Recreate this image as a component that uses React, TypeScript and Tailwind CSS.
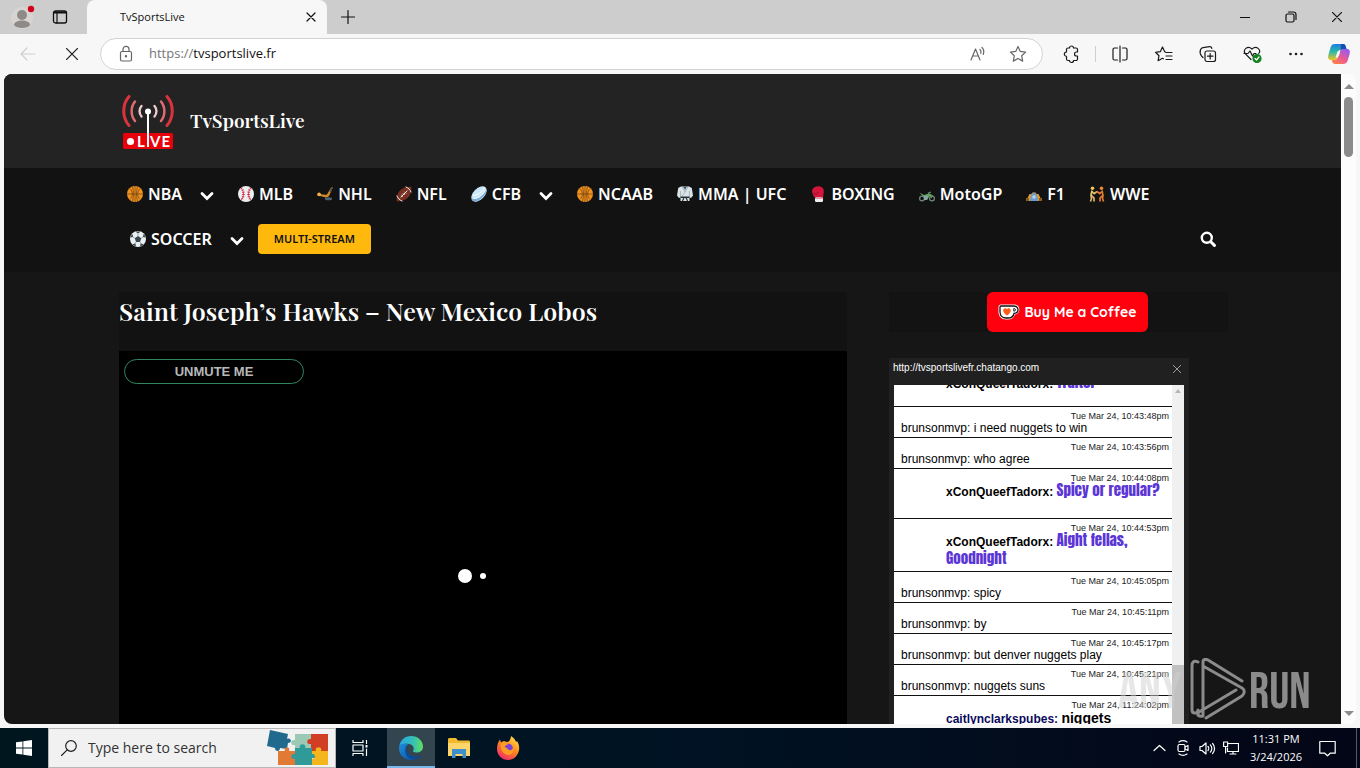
import type { ReactNode } from "react";

const nav = [
  { label: "NBA", icon: <Basketball />, menu: true },
  { label: "MLB", icon: <Baseball /> },
  { label: "NHL", icon: <FieldHockey /> },
  { label: "NFL", icon: <Football /> },
  { label: "CFB", icon: <Rugby />, menu: true },
  { label: "NCAAB", icon: <Basketball /> },
  { label: "MMA | UFC", icon: <Gi /> },
  { label: "BOXING", icon: <Glove /> },
  { label: "MotoGP", icon: <Motorcycle /> },
  { label: "F1", icon: <RaceCar /> },
  { label: "WWE", icon: <Wrestlers /> },
];

type Message = {
  time: string;
  name: string;
  text: string;
  kind: "plain" | "impact" | "impactShort" | "bold";
};

const messages: Message[] = [
  { time: "", name: "xConQueefTadorx", text: "Traitor", kind: "impactShort" },
  { time: "Tue Mar 24, 10:43:48pm", name: "brunsonmvp", text: "i need nuggets to win", kind: "plain" },
  { time: "Tue Mar 24, 10:43:56pm", name: "brunsonmvp", text: "who agree", kind: "plain" },
  { time: "Tue Mar 24, 10:44:08pm", name: "xConQueefTadorx", text: "Spicy or regular?", kind: "impactShort" },
  { time: "Tue Mar 24, 10:44:53pm", name: "xConQueefTadorx", text: "Aight fellas, Goodnight", kind: "impact" },
  { time: "Tue Mar 24, 10:45:05pm", name: "brunsonmvp", text: "spicy", kind: "plain" },
  { time: "Tue Mar 24, 10:45:11pm", name: "brunsonmvp", text: "by", kind: "plain" },
  { time: "Tue Mar 24, 10:45:17pm", name: "brunsonmvp", text: "but denver nuggets play", kind: "plain" },
  { time: "Tue Mar 24, 10:45:21pm", name: "brunsonmvp", text: "nuggets suns", kind: "plain" },
  { time: "Tue Mar 24, 11:24:02pm", name: "caitlynclarkspubes", text: "niggets", kind: "bold" },
];

function Emoji({ children }: { children: ReactNode }) {
  return (
    <svg viewBox="0 0 16 16" className="h-4 w-4 shrink-0" aria-hidden="true">
      {children}
    </svg>
  );
}

function Basketball() {
  return (
    <Emoji>
      <circle cx="8" cy="8" r="8" fill="#f0921e" />
      <path d="M8 0v16M0 8h16M2.600 2.400c3.600 3 3.600 8.200 0 11.200M13.400 2.400c-3.600 3-3.600 8.200 0 11.200M5.500.6c1.300 4.600 1.300 10.200 0 14.800M10.500.6c-1.300 4.600-1.300 10.200 0 14.800" fill="none" stroke="#6b3d12" strokeWidth=".7" />
    </Emoji>
  );
}

function Baseball() {
  return (
    <Emoji>
      <circle cx="8" cy="8" r="8" fill="#eceff1" />
      <path d="M3.200 2c3 3.600 3 8.400 0 12M12.800 2c-3 3.600-3 8.400 0 12" fill="none" stroke="#d0203c" strokeWidth=".8" />
      <path d="M3.200 2c3 3.600 3 8.400 0 12M12.800 2c-3 3.600-3 8.400 0 12" fill="none" stroke="#d0203c" strokeWidth="2.600" strokeDasharray=".7 1.500" />
    </Emoji>
  );
}

function FieldHockey() {
  return (
    <Emoji>
      <path d="M15.800 1.600 12.500 9c-1 2-2.600 2.800-4.600 2.200L2 9.800c-1.200-.5-.8-2.400.4-2.600.8-.1 1 .6 1.800 1l4 .6c1.100.2 1.900-.3 2.400-1.200L14.400 1z" fill="#d08a2a" />
      <path d="m14.400 1 1.400.6-2 4.500-1.500-.9z" fill="#4a4f50" />
      <circle cx="2" cy="8.400" r="1.800" fill="#f2b04a" />
      <ellipse cx="11.500" cy="12.800" rx="3.600" ry="1.500" fill="#4a6373" />
    </Emoji>
  );
}

function Football() {
  return (
    <Emoji>
      <path d="M.8 15.200C-.4 8 4.600 0 15.200.8 16.400 8 11.400 16 .8 15.200z" fill="#7a3020" />
      <path d="M9.600.8c2.600 1 4.600 3 5.600 5.600M.8 9.600c1 2.600 3 4.600 5.600 5.600M4.600 11.400l6.800-6.800M5.400 9l1.600 1.600M7 7.400 8.600 9M8.600 5.800l1.600 1.600" fill="none" stroke="#f3eeee" strokeWidth="1" />
    </Emoji>
  );
}

function Rugby() {
  return (
    <Emoji>
      <ellipse cx="8" cy="8" rx="9.300" ry="5.600" transform="rotate(-45 8 8)" fill="#c9e6f8" />
      <path d="M1 12.500c6 1 11-3 14.500-9C16 8 8 17 1.500 15z" fill="#79a9d6" />
      <path d="M2 9.500C7.500 9 10.500 6 13.500 1.500M2.500 12.500c5.500 0 9-3.500 11.500-8" fill="none" stroke="#fff" strokeWidth="1" />
    </Emoji>
  );
}

function Gi() {
  return (
    <Emoji>
      <path d="M4 .5h8L14.800 2l1.200 7.500-2 2.500-1.500-.5V15h-9v-3.500L2 12 0 9.500 1.200 2z" fill="#dbe3e7" />
      <path d="M6 .5 8 4l2-3.500z" fill="#455a64" />
      <path d="m5 .5 3 5.500 3-5.500M8 6l-3 4.500M3.600 5v6M12.400 5v6" fill="none" stroke="#90a4ae" strokeWidth=".7" />
      <path d="M3.500 10.500h9V12h-9z" fill="#263238" />
      <path d="M7 11.500 5.500 15M9 11.500l1.500 3.500" stroke="#263238" strokeWidth="1.200" />
    </Emoji>
  );
}

function Glove() {
  return (
    <Emoji>
      <path d="M4 11 2.500 7.500C1 4 3.500.4 8 .3c4-.1 6 2.200 5.800 5.600L13 11.500z" fill="#d4163c" />
      <path d="M3 6.500c2 2.500 4.500 2 5-.5" fill="none" stroke="#930f2b" strokeWidth="1" />
      <rect x="5" y="11" width="8" height="5" rx="1.200" fill="#eceff1" />
      <path d="M5 12h8" stroke="#d4163c" strokeWidth=".8" />
    </Emoji>
  );
}

function Motorcycle() {
  return (
    <Emoji>
      <g fill="none" stroke="#6f8a78" strokeWidth="1.200">
        <circle cx="3" cy="12.500" r="2.400" />
        <circle cx="13" cy="12.500" r="2.400" />
        <path d="M12.800 12 9.500 7l2.500-1" />
      </g>
      <path d="M.5 6.500 5 9l5-1.500 4.500 2-4 .8-2 3.200H6L4 10.500z" fill="#5fa661" />
      <path d="M5 10h4l-1 4H5z" fill="#90a4ae" />
    </Emoji>
  );
}

function RaceCar() {
  return (
    <Emoji>
      <path d="M3.500 8h2l1-1.500h3l1 1.500h2l3.500 7H0z" fill="#e99a22" />
      <path d="M5.200 8.500c1-2.500 4.600-2.500 5.600 0L12.500 15h-9z" fill="#6f9bc9" />
      <circle cx="8" cy="11" r="1.800" fill="#b3d4ee" />
      <path d="M0 12h3v3H0zM13 12h3v3h-3z" fill="#8a5c22" />
    </Emoji>
  );
}

function Wrestlers() {
  return (
    <Emoji>
      <circle cx="3.500" cy="2.200" r="1.800" fill="#f3c352" />
      <circle cx="12.500" cy="2.200" r="1.800" fill="#ef8a32" />
      <path d="M3 4.500 2 9.500l.5 3-1 3M2.500 9.500 5 12v3.500M3 5.500l2.200 2.200L8 5.500" fill="none" stroke="#dcb468" strokeWidth="1.700" />
      <path d="m13 4.500 1 5-.5 3 1 3M13.500 9.500 11 12v3.500M13 5.500l-2.200 2.200L8 5.500" fill="none" stroke="#de7b30" strokeWidth="1.700" />
      <path d="m3 5-1 4.500" stroke="#d8d36c" strokeWidth="1.200" />
    </Emoji>
  );
}

function Soccer() {
  return (
    <Emoji>
      <circle cx="8" cy="8" r="8" fill="#eceff1" />
      <path d="m8 5 3.200 2.300L10 11H6L4.800 7.300zM5.300.5h5.400L8 2.600zM.2 6.500 2.200 2.600l1 3.300zM15.800 6.500l-2-3.900-1 3.300zM2 13.300l4 2.500-.6-3.200zM14 13.300l-4 2.500.6-3.200z" fill="#37474f" />
      <path d="M8 5V2.600M11.200 7.300l2.200-1.500M10 11l1.200 2M6 11l-1.200 2M4.800 7.300 2.600 5.800" stroke="#607d8b" strokeWidth=".6" />
    </Emoji>
  );
}

function Chevron() {
  return (
    <svg viewBox="0 0 14 14" className="mt-1 h-3.5 w-3.5" aria-hidden="true">
      <path d="m2 4.500 5 5 5-5" fill="none" stroke="#fff" strokeWidth="2.800" strokeLinecap="round" />
    </svg>
  );
}

function Line({ children, className = "h-5 w-5", box = "0 0 20 20" }: { children: ReactNode; className?: string; box?: string }) {
  return (
    <svg viewBox={box} className={className} fill="none" stroke="currentColor" strokeWidth="1.200" strokeLinecap="round" strokeLinejoin="round" aria-hidden="true">
      {children}
    </svg>
  );
}

function ToolButton({ label, children }: { label: string; children: ReactNode }) {
  return (
    <button type="button" aria-label={label} className="flex h-8 w-11 shrink-0 items-center justify-center text-[#1b1b1b]">
      {children}
    </button>
  );
}

function TabStrip() {
  return (
    <div className="flex h-[34px] shrink-0 bg-[#cdcdcd] text-[#111]">
      <button type="button" aria-label="Profile" className="flex w-[46px] items-center justify-center">
        <svg viewBox="0 0 24 24" className="h-6 w-6">
          <circle cx="11" cy="13" r="11" fill="#d8d4d1" />
          <circle cx="11" cy="10" r="5" fill="#8d8a87" />
          <path d="M3 20c0-6 16-6 16 0-2 4-14 4-16 0z" fill="#8d8a87" />
          <circle cx="20" cy="4" r="3.200" fill="#d0021b" />
        </svg>
      </button>
      <button type="button" aria-label="Tab actions" className="flex w-7 items-center justify-center">
        <Line className="h-4 w-4" box="0 0 16 16">
          <rect x="1.500" y="2" width="13" height="12" rx="2" strokeWidth="1.300" />
          <path d="M2 3.500h12" strokeWidth="2" />
          <path d="M5 4v10" />
        </Line>
      </button>
      <div className="ml-[13px] flex w-60 items-center rounded-t-lg bg-[#f7f7f7] pr-2 pl-[33px]">
        <span className="flex-1 text-[11px]">TvSportsLive</span>
        <button type="button" aria-label="Close tab" className="p-[3px]">
          <Line className="h-2.5 w-2.5" box="0 0 10 10">
            <path d="m1 1 8 8M9 1 1 9" />
          </Line>
        </button>
      </div>
      <button type="button" aria-label="New tab" className="flex w-[42px] items-center justify-center">
        <Line className="h-4 w-4" box="0 0 16 16">
          <path d="M8 1.500v13M1.500 8h13" />
        </Line>
      </button>
      <div className="flex-1" />
      <button type="button" aria-label="Minimize" className="flex w-[46px] items-center justify-center">
        <Line className="h-2.5 w-2.5" box="0 0 10 10">
          <path d="M0 5.500h10" />
        </Line>
      </button>
      <button type="button" aria-label="Restore" className="flex w-[46px] items-center justify-center">
        <Line className="h-3 w-3" box="0 0 12 12">
          <rect x="1" y="3" width="8" height="8" rx="1.500" />
          <path d="M3.500 1h5A2.500 2.500 0 0 1 11 3.500v5" />
        </Line>
      </button>
      <button type="button" aria-label="Close" className="flex w-[46px] items-center justify-center">
        <Line className="h-2.5 w-2.5" box="0 0 10 10">
          <path d="m0 0 10 10M10 0 0 10" />
        </Line>
      </button>
    </div>
  );
}

function Toolbar() {
  return (
    <div className="flex h-10 shrink-0 items-center bg-[#f7f7f7]">
      <button type="button" aria-label="Back" className="ml-1.5 flex w-11 items-center justify-center text-[#cfcfcf]">
        <Line>
          <path d="M17 10H3M9 4l-6 6 6 6" />
        </Line>
      </button>
      <ToolButton label="Stop">
        <Line className="h-3 w-3" box="0 0 12 12">
          <path d="m0 0 12 12M12 0 0 12" />
        </Line>
      </ToolButton>
      <div className="ml-1.5 flex h-8 min-w-0 flex-1 items-center rounded-full border border-[#d3d3d3] bg-white pr-3.5 pl-4">
        <Line className="h-[18px] w-[18px] text-[#666]" box="0 0 18 18">
          <rect x="3.500" y="6.500" width="11" height="9.500" rx="1.500" />
          <path d="M6 6.500V4.300a3 3 0 0 1 6 0v2.200" />
          <circle cx="9" cy="11.200" r=".6" fill="currentColor" />
        </Line>
        <label className="ml-3.5 flex flex-1 items-center text-[13px]">
          <span className="text-[#767676]">https://</span>
          <input aria-label="Address" className="min-w-0 flex-1 bg-transparent text-[#111] outline-none" defaultValue="tvsportslive.fr" />
        </label>
        <button type="button" aria-label="Read aloud" className="mr-5 text-[#666]">
          <Line>
            <path d="M3 16 7.500 5 12 16M4.700 12h5.600M12 5.500c1 1 1.200 2.500.8 3.800M14 3.500c1.800 1.800 2.200 4.500 1.200 7" />
          </Line>
        </button>
        <button type="button" aria-label="Favorite" className="text-[#666]">
          <Line>
            <path d="m10 2.500 2.300 4.900 5.300.7-3.900 3.700 1 5.300L10 14.500l-4.700 2.600 1-5.300-3.900-3.700 5.300-.7z" />
          </Line>
        </button>
      </div>
      <div className="ml-[7px] flex items-center">
        <ToolButton label="Extensions">
          <Line>
            <path d="M7.500 4a2 2 0 0 1 4 0H14a1.500 1.500 0 0 1 1.500 1.500V8h-1a2 2 0 0 0 0 4h1v3a1.500 1.500 0 0 1-1.500 1.500h-2.500a2 2 0 0 1-4 0H6A1.500 1.500 0 0 1 4.500 15v-2.700a2 2 0 0 1 0-4.300V5.500A1.500 1.500 0 0 1 6 4z" />
          </Line>
        </ToolButton>
        <div className="mr-0.5 ml-px h-4 w-px bg-[#cfcfcf]" />
        <ToolButton label="Split screen">
          <Line>
            <path d="M7.500 4H4.500A1.500 1.500 0 0 0 3 5.500v9A1.500 1.500 0 0 0 4.500 16h3M12.500 4h3A1.500 1.500 0 0 1 17 5.500v9a1.500 1.500 0 0 1-1.500 1.500h-3M10 2v16" />
          </Line>
        </ToolButton>
        <ToolButton label="Favorites">
          <Line>
            <path d="M11.500 8 10.700 7.700 8.500 3 6.300 7.700l-4.800.6 3.500 3.400-.9 5 4.400-2.400.9.500M12 8.500h6M12 12h6M12 15.500h6" />
          </Line>
        </ToolButton>
        <ToolButton label="Collections">
          <Line>
            <rect x="7" y="7" width="10.500" height="10.500" rx="2" />
            <path d="M12.200 9.500v5.500M9.500 12.200H15M5 13.500 3.500 12C2 10 2 7 2.600 5.500A3 3 0 0 1 5 3.600l6.500-1a2 2 0 0 1 2.300 1.700" />
          </Line>
        </ToolButton>
        <ToolButton label="Browser essentials">
          <Line>
            <path d="M9 15.500 3.200 9.600C.5 6 5.500.8 10 5c4.500-4.200 9.500 1 6.800 4.500M2 9.500h4L8 7l2.500 5 1.500-2.500h2" />
            <circle cx="15" cy="14.500" r="4" fill="#13801d" stroke="#13801d" />
            <path d="m13 14.500 1.500 1.500 2.500-3" stroke="#fff" />
          </Line>
        </ToolButton>
        <ToolButton label="Settings and more">
          <svg viewBox="0 0 20 20" className="h-5 w-5" fill="currentColor">
            <circle cx="4.500" cy="10" r="1.300" />
            <circle cx="10" cy="10" r="1.300" />
            <circle cx="15.500" cy="10" r="1.300" />
          </svg>
        </ToolButton>
        <button type="button" aria-label="Copilot" className="flex w-[42px] justify-center">
          <svg viewBox="0 0 24 24" className="h-6 w-6">
            <defs>
              <linearGradient id="cpA" x1="0" y1="0" x2="0" y2="1">
                <stop offset="0" stopColor="#1a7fe0" />
                <stop offset=".5" stopColor="#2fb9a6" />
                <stop offset="1" stopColor="#f2c51c" />
              </linearGradient>
              <linearGradient id="cpB" x1="0" y1="1" x2=".7" y2="0">
                <stop offset="0" stopColor="#ff8b35" />
                <stop offset=".5" stopColor="#ee5b8f" />
                <stop offset="1" stopColor="#9b5be8" />
              </linearGradient>
            </defs>
            <path d="M8 2h8c2 0 2.500 1.500 3 3.500l.5 1.500h-3c-2 0-3 1-3.500 3l-1.500 5c-.7 2-1.700 3-4 3H4c-3 0-3.300-2.500-2.500-5.500l2-7C4.300 3 5.500 2 8 2z" fill="url(#cpA)" />
            <path d="M16 22H8c-2 0-2.500-1.500-3-3.500L4.500 18h3c2 0 3-1 3.500-3l1.500-5c.7-2 1.700-3 4-3H20c3 0 3.300 2.500 2.500 5.500l-2 6.500c-.8 2-2 3-4.500 3z" fill="url(#cpB)" />
            <path d="M14 2h2c2 0 2.500 1.500 3 3.500l.5 1.500h-3c-1.500 0-2.500.6-3 1.800z" fill="#174fae" />
            <path d="m10.500 9.500 3-2-1.200 5.500-2 3-1.800-.8z" fill="#fff" opacity=".9" />
          </svg>
        </button>
      </div>
    </div>
  );
}

function Logo() {
  return (
    <svg viewBox="0 0 52 54" className="mt-px h-[54px] w-[52px]" aria-label="Live">
      <g fill="none" strokeLinecap="round">
        <path d="M7 1.500c-7 8-7 21 0 29M45 1.500c7 8 7 21 0 29" stroke="#d9333b" strokeWidth="3" />
        <path d="M13 6.500c-4.500 5.500-4.500 14 0 19.500M39 6.500c4.500 5.500 4.500 14 0 19.500" stroke="#de6c72" strokeWidth="2.500" />
        <path d="M19.500 11c-2.600 3-2.600 7.500 0 10.500M32.500 11c2.600 3 2.600 7.500 0 10.500" stroke="#ecc9ca" strokeWidth="2.400" />
      </g>
      <rect x="1" y="38" width="50" height="16" rx="1.500" fill="#e8000b" />
      <circle cx="8.500" cy="46.500" r="3.600" fill="#fff" />
      <g fontFamily="Lato, sans-serif" fontWeight="700" fontSize="15" fill="#fff">
        <text x="15" y="51.500">L</text>
        <text x="28" y="51.500">V</text>
        <text x="39.500" y="51.500">E</text>
      </g>
      <circle cx="26" cy="16.500" r="3" fill="#fff" />
      <path d="M26 16.500V52" stroke="#fff" strokeWidth="2" />
    </svg>
  );
}

function SiteNav() {
  return (
    <nav className="bg-[#121212] pt-[3px] pb-[11px] font-['Noto_Sans',sans-serif] text-base font-semibold text-white">
      <div className="mx-auto max-w-[1111px] px-3">
        <ul className="-ml-0.5 flex h-[45px] items-center gap-6">
          {nav.map((item) => (
            <li key={item.label} className="flex items-center">
              <a href="#" className="flex items-center gap-[5px] whitespace-nowrap">
                {item.icon}
                {item.label}
              </a>
              {item.menu && (
                <button type="button" aria-label={`${item.label} menu`} className="ml-[18px]">
                  <Chevron />
                </button>
              )}
            </li>
          ))}
        </ul>
        <div className="flex h-[45px] items-center pl-px">
          <a href="#" className="flex items-center gap-[5px]">
            <Soccer />
            SOCCER
          </a>
          <button type="button" aria-label="Soccer menu" className="ml-[18px]">
            <Chevron />
          </button>
          <a href="#" className="ml-3.5 flex h-[30px] items-center rounded-sm bg-[#ffb90d] px-4 pt-px text-[11px] text-[#111]">
            MULTI-STREAM
          </a>
          <button type="button" aria-label="Search" className="ml-auto">
            <svg viewBox="0 0 16 16" className="h-4 w-4" fill="none" stroke="#fff" strokeLinecap="round">
              <circle cx="6.800" cy="6.800" r="5" strokeWidth="2.400" />
              <path d="m10.800 10.800 3.600 3.600" strokeWidth="3" />
            </svg>
          </button>
        </div>
      </div>
    </nav>
  );
}

const impact = "font-[Impact,Anton,sans-serif] text-[15px] leading-[14px] font-normal text-[#5b35d5]";

function ChatRow({ msg }: { msg: Message }) {
  const plain = msg.kind === "plain";
  return (
    <li className={`border-b border-[#111] pt-1 first:pb-[13px] ${msg.kind === "impactShort" ? "pb-[17px]" : "pb-0.5"}`}>
      <time className="block h-2.5 pr-[3px] text-right text-[9px] leading-[10px] text-[#222]">{msg.time}</time>
      <p className={plain ? "pl-[7px] text-xs leading-[14px]" : "pr-2.5 pl-[52px] text-xs leading-[18px]"}>
        <span className={plain ? "" : msg.kind === "bold" ? "font-bold text-[#0a0a5c]" : "font-bold"}>{msg.name}:</span>{" "}
        <span className={plain ? "" : msg.kind === "bold" ? "text-sm leading-[14px] font-bold" : impact}>{msg.text}</span>
      </p>
    </li>
  );
}

function Chat() {
  return (
    <section className="mt-[26px] w-[300px] bg-[#202020] px-[5px] font-['Liberation_Sans',Arial,sans-serif]">
      <header className="flex h-[27px] items-start justify-between pt-[3px] text-white">
        <a href="#" className="-ml-px text-[10px] leading-[14px]">http://tvsportslivefr.chatango.com</a>
        <button type="button" aria-label="Close chat" className="mt-1 mr-[3px] text-[#bbb]">
          <Line className="h-2 w-2" box="0 0 8 8">
            <path d="m0 0 8 8M8 0 0 8" strokeWidth=".8" />
          </Line>
        </button>
      </header>
      <div className="flex h-[440px] overflow-hidden bg-white text-black">
        <ul className="-mt-6 flex-1">
          {messages.map((m) => (
            <ChatRow key={m.time} msg={m} />
          ))}
        </ul>
        <div className="w-3 bg-[#f0f0f0]">
          <div className="mx-auto mt-1 h-0 w-0 border-x-[3px] border-b-4 border-x-transparent border-b-[#b5b5b5]" />
          <div className="mt-[272px] h-40 bg-[#c1c1c1]" />
        </div>
      </div>
    </section>
  );
}

function Page() {
  return (
    <div className="min-w-0 flex-1 overflow-hidden bg-[#161616]">
      <header className="bg-[#232323]">
        <div className="mx-auto flex h-[94px] max-w-[1111px] items-center gap-4 px-[5px]">
          <Logo />
          <a href="#" className="pb-0.5 font-['Playfair_Display','Liberation_Serif',serif] text-[19px] font-semibold text-white">TvSportsLive</a>
        </div>
      </header>
      <SiteNav />
      <div className="mx-auto mt-5 flex max-w-[1111px] gap-[42px] pl-0.5">
        <main className="min-w-0 flex-1 bg-[#121212]">
          <h1 className="h-[59px] pt-px font-['Playfair_Display','Liberation_Serif',serif] text-[25px] leading-9 font-semibold whitespace-nowrap text-white">
            Saint Joseph’s Hawks – New Mexico Lobos
          </h1>
          <div className="flex h-[450px] flex-col bg-black px-[5px] pt-2">
            <button type="button" className="h-[25px] w-[180px] rounded-full border border-[#2f8560] pb-px font-['Liberation_Sans',Arial,sans-serif] text-[13px] leading-none font-bold text-[#b8b8b8]">
              UNMUTE ME
            </button>
            <div className="flex flex-1 items-center gap-2 self-center pr-[22px] pb-[33px]">
              <div className="h-3.5 w-3.5 rounded-full bg-white" />
              <div className="h-1.5 w-1.5 rounded-full bg-white" />
            </div>
          </div>
        </main>
        <aside className="w-[339px] shrink-0">
          <div className="bg-[#131313]">
            <a href="#" className="ml-[98px] flex h-10 w-[161px] items-center justify-center gap-1 rounded-md bg-[#ff000e] font-['Quicksand',Lato,sans-serif] text-sm font-bold whitespace-nowrap text-white">
              <svg viewBox="0 0 22 16" className="h-4 w-[22px]">
                <path d="M3 .5h13c7 0 7 9 1 10-1 3-3.500 5-7 5H8C3.500 15.500 .5 12 .5 8V3C.5 1.500 1.500.5 3 .5z" fill="#fff" />
                <path d="M3 2h12.500c6 0 6 7 .5 7.300-.5 3-3 4.700-6 4.700H8c-3.500 0-6-2.500-6-6V3c0-.7.4-1 1-1z" fill="#fff" stroke="#111" strokeWidth="1.300" />
                <path d="M15.800 4.500c2.400 0 2.400 2.600 0 2.600z" fill="#fff" stroke="#111" strokeWidth="1" />
                <path d="M9 11.500C3.500 8 5 4.300 7.200 4.300c.9 0 1.500.5 1.800 1.100.3-.6.9-1.100 1.800-1.100C13 4.300 14.500 8 9 11.500z" fill="#ff5a16" />
              </svg>
              Buy Me a Coffee
            </a>
          </div>
          <Chat />
        </aside>
      </div>
    </div>
  );
}

function Watermark() {
  return (
    <svg viewBox="0 0 194 64" className="pointer-events-none absolute right-[46px] bottom-0.5 h-16 w-[194px] opacity-50" aria-hidden="true">
      <g fontFamily="'Bebas Neue', 'Liberation Sans', sans-serif" fill="#fff">
        <text x="2" y="50" fontSize="52" fill="#d0d0d0">ANY</text>
        <text x="133" y="50" fontSize="50">RUN</text>
      </g>
      <path d="M82 4c-4-2-6 0-6 4v44c0 4 6 4 6 0M87 49V4c0-3 3-3 5-2l34 21M90 60l36-22c3-3 3-6 0-8L87 8v50c-4 1-7-1-4-4l37-22" fill="none" stroke="#fff" strokeWidth="3" strokeLinejoin="round" strokeLinecap="round" />
    </svg>
  );
}

function SearchArt() {
  return (
    <svg viewBox="0 0 64 38" className="h-[38px] w-16 shrink-0" aria-hidden="true">
      <path d="m3 1 18 4-1 5c4-2 6 4 1 4l-1 6-7-1c0 4-5 4-5 0l-8-2z" fill="#216a8d" />
      <path d="M28 5h16v6c4-3 6 5 0 4v7H28v-6c-5 1-5-6 0-5z" fill="#9bc9b4" />
      <path d="M44 5h17v17h-6c0 5-6 5-6 0h-5v-7c-5 1-5-6 0-5z" fill="#d23e24" />
      <path d="M11 22h7c-2-5 6-5 4 0h6v6c5-2 5 6 0 4v4H11z" fill="#e07a35" />
      <path d="M28 19h5c-2-5 7-5 5 0h7v6c5-2 5 6 0 4v7H28v-6c-5 1-5-6 0-5z" fill="#2f9a97" />
      <path d="M45 22h4c-2-5 7-5 5 0h7v14H45v-6c4 1 4-6 0-5z" fill="#f5b51d" />
    </svg>
  );
}

function Taskbar() {
  return (
    <footer className="flex h-10 shrink-0 items-stretch bg-linear-to-r from-[#00161f] via-[#001324] to-[#030616] text-white">
      <button type="button" aria-label="Start" className="flex w-12 items-center justify-center">
        <svg viewBox="0 0 16 16" className="h-4 w-4" fill="#fff">
          <path d="M0 2.300 6.500 1.400v6.200H0zM7.300 1.300 16 0v7.600H7.300zM0 8.400h6.500v6.200L0 13.700zM7.300 8.400H16V16l-8.700-1.300z" />
        </svg>
      </button>
      <label className="flex w-72 items-center border border-[#b7b7b7] bg-[#f1f1f1] pr-1 pl-3 text-[#222]">
        <Line className="h-4 w-4 shrink-0" box="0 0 16 16">
          <circle cx="10" cy="6" r="5.300" />
          <path d="M6.200 9.800.5 15.500" />
        </Line>
        <input aria-label="Search" placeholder="Type here to search" className="ml-[11px] min-w-0 flex-1 bg-transparent text-sm outline-none placeholder:text-[#333]" />
        <SearchArt />
      </label>
      <button type="button" aria-label="Task view" className="flex w-12 items-center justify-center">
        <Line className="h-4 w-4" box="0 0 16 16">
          <path d="M1 .5v2h10v-2M1 15.500v-2h10v2M1 5h10v6H1zM14.500.5v3M14.500 9v6.500" />
          <path d="M13.500 5h2v2.500h-2z" fill="#fff" stroke="none" />
        </Line>
      </button>
      <button type="button" aria-label="Microsoft Edge" className="ml-[3px] flex w-12 items-center justify-center border-b-2 border-[#76b9ed] bg-[#33464f] pt-0.5">
        <svg viewBox="0 0 24 24" className="h-6 w-6">
          <defs>
            <linearGradient id="edA" x1="0" y1=".5" x2="1" y2=".5">
              <stop offset="0" stopColor="#2aa4e8" />
              <stop offset=".6" stopColor="#35c1b4" />
              <stop offset="1" stopColor="#66de5c" />
            </linearGradient>
            <linearGradient id="edB" x1="0" y1="0" x2="1" y2="1">
              <stop offset="0" stopColor="#1d8fe0" />
              <stop offset="1" stopColor="#0b4f9e" />
            </linearGradient>
          </defs>
          <path d="M.3 10C1.300 4 6 0 12 0c7 0 12 5 12 10.500 0 4-3 6-6.500 6-3 0-4-1-3.300-2 1-1 1-5.500-4-6.500-4-.8-8 0-9.900 2z" fill="url(#edA)" />
          <path d="M.3 10C2 7.500 6 6.700 9.500 8c-3 2-3.500 5.500-2 9 1.500 3.500 4.500 6 8 6.500C7 26-1.500 19 .3 10z" fill="url(#edB)" />
          <path d="M9.500 8c-4 3-2 11.500 6 12.500 3 .3 5.500-.8 6.800-1.500-1.500 2.500-4 4-6.800 4.500C7 24 3 13 9.500 8z" fill="#0d4a94" />
        </svg>
      </button>
      <button type="button" aria-label="File Explorer" className="flex w-12 items-center justify-center">
        <svg viewBox="0 0 22 20" className="h-5 w-[22px]">
          <path d="M0 1.500C0 .7.500 0 1.500 0H8l2 2.500h10.500c1 0 1.500.5 1.500 1.500v14H0z" fill="#f2b92f" />
          <path d="M0 5h22v13H0z" fill="#fcd66b" />
          <path d="M4 11h14v9h-3.500v-4h-7v4H4z" fill="#3f8fcd" />
        </svg>
      </button>
      <button type="button" aria-label="Firefox" className="flex w-[50px] items-center justify-center">
        <svg viewBox="0 0 24 24" className="h-6 w-6">
          <defs>
            <linearGradient id="ffA" x1=".8" y1="0" x2=".2" y2="1">
              <stop offset="0" stopColor="#ffe14d" />
              <stop offset=".45" stopColor="#ff8a1e" />
              <stop offset="1" stopColor="#f0246e" />
            </linearGradient>
          </defs>
          <path d="M15 0c3 2 4.500 4 5 6l1-1c2 3 2.500 6 2 9-1 6-5.500 10-11 10C5.500 24 1 19 1 13c0-4 1-7 3-9.500l1 3C6 5.500 7 5 8 5l3 1c2 0 4-3 4-6z" fill="url(#ffA)" />
          <circle cx="12.500" cy="12" r="4.300" fill="#7a43d6" />
          <path d="M5 7c3-1 5 0 7 1.500-2 .5-3 1-3.500 2.500 2 0 2.500 2 4.500 3 2 .8 4-.5 4-2 2 5-3 8-7 6.500C6 17 4 12 5 7z" fill="#ff9c22" />
        </svg>
      </button>
      <div className="flex-1" />
      <div className="flex items-center">
        <button type="button" aria-label="Show hidden icons" className="mr-2">
          <Line className="h-4 w-4" box="0 0 16 16">
            <path d="m3 10.500 5.500-5 5.500 5" />
          </Line>
        </button>
        <button type="button" aria-label="Meet now" className="mr-2">
          <Line className="h-4 w-4" box="0 0 16 16">
            <rect x="3" y="4.500" width="7" height="7" rx="1.500" />
            <path d="m10 7 3-1.500v5L10 9M4 2c2.500-1.600 5.500-1.600 8 0M4 14c2.500 1.600 5.500 1.600 8 0" />
          </Line>
        </button>
        <button type="button" aria-label="Volume" className="mr-[7px]">
          <Line className="h-[17px] w-[17px]" box="0 0 17 17">
            <path d="M1 6.500h2L7 3v11L3 10.500H1zM9 6.500c1 1 1 3 0 4M11.300 4.800c2 2 2 5.400 0 7.400M13.600 3.500c2.600 2.800 2.600 7.200 0 10" />
          </Line>
        </button>
        <button type="button" aria-label="Network" className="mr-2">
          <Line className="h-4 w-4" box="0 0 16 16">
            <path d="M5.500 3.500h10v8h-11V8M.6 2h4v4.500h-4zM2.600 6.500V13M10 11.500V14M7 14h6" />
          </Line>
        </button>
        <div className="w-[58px] text-center text-[11px] leading-[18px]">
          <div>11:31 PM</div>
          <div>3/24/2026</div>
        </div>
        <button type="button" aria-label="Notifications" className="mr-4 ml-3.5">
          <Line className="h-[17px] w-[17px]" box="0 0 17 17">
            <path d="M.8 1.500h15.400v11.700h-5l-2.700 2.600-2.700-2.600h-5z" />
          </Line>
        </button>
        <div className="ml-1 h-10 w-1 border-l border-[#555a66]" />
      </div>
    </footer>
  );
}

export default function App() {
  return (
    <div className="flex h-screen flex-col overflow-hidden bg-[#f7f7f7] font-['Segoe_UI','Open_Sans',sans-serif]">
      <TabStrip />
      <Toolbar />
      <div className="relative mx-1 mb-1 flex min-h-0 flex-1 overflow-hidden rounded-lg">
        <Page />
        <div className="flex w-[15px] shrink-0 flex-col items-center justify-between bg-[#fcfcfc] pt-2.5 pb-2">
          <div className="flex flex-col items-center">
            <div className="h-0 w-0 border-x-[5px] border-b-[5px] border-x-transparent border-b-[#8b8b8b]" />
            <div className="mt-2 h-[60px] w-[9px] rounded-full bg-[#8b8b8b]" />
          </div>
          <div className="h-0 w-0 border-x-[5px] border-t-[5px] border-x-transparent border-t-[#8b8b8b]" />
        </div>
        <Watermark />
      </div>
      <Taskbar />
    </div>
  );
}
